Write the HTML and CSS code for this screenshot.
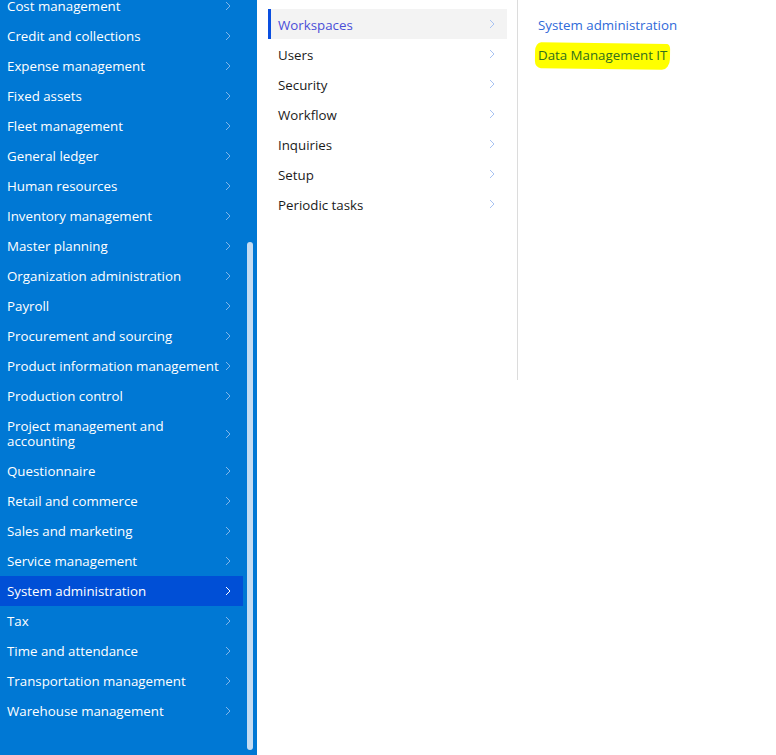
FILE: index.html
```html
<!DOCTYPE html>
<html>
<head>
<meta charset="utf-8">
<link rel="stylesheet" href="styles.css">
</head>
<body>
<div class="page">
  <nav class="modules">
    <ul class="mod-list">
      <li class="mod"><span>Cost management</span><svg class="chev" viewBox="0 0 6 10"><path d="M1 1l4 4-4 4"/></svg></li>
      <li class="mod"><span>Credit and collections</span><svg class="chev" viewBox="0 0 6 10"><path d="M1 1l4 4-4 4"/></svg></li>
      <li class="mod"><span>Expense management</span><svg class="chev" viewBox="0 0 6 10"><path d="M1 1l4 4-4 4"/></svg></li>
      <li class="mod"><span>Fixed assets</span><svg class="chev" viewBox="0 0 6 10"><path d="M1 1l4 4-4 4"/></svg></li>
      <li class="mod"><span>Fleet management</span><svg class="chev" viewBox="0 0 6 10"><path d="M1 1l4 4-4 4"/></svg></li>
      <li class="mod"><span>General ledger</span><svg class="chev" viewBox="0 0 6 10"><path d="M1 1l4 4-4 4"/></svg></li>
      <li class="mod"><span>Human resources</span><svg class="chev" viewBox="0 0 6 10"><path d="M1 1l4 4-4 4"/></svg></li>
      <li class="mod"><span>Inventory management</span><svg class="chev" viewBox="0 0 6 10"><path d="M1 1l4 4-4 4"/></svg></li>
      <li class="mod"><span>Master planning</span><svg class="chev" viewBox="0 0 6 10"><path d="M1 1l4 4-4 4"/></svg></li>
      <li class="mod"><span>Organization administration</span><svg class="chev" viewBox="0 0 6 10"><path d="M1 1l4 4-4 4"/></svg></li>
      <li class="mod"><span>Payroll</span><svg class="chev" viewBox="0 0 6 10"><path d="M1 1l4 4-4 4"/></svg></li>
      <li class="mod"><span>Procurement and sourcing</span><svg class="chev" viewBox="0 0 6 10"><path d="M1 1l4 4-4 4"/></svg></li>
      <li class="mod"><span>Product information management</span><svg class="chev" viewBox="0 0 6 10"><path d="M1 1l4 4-4 4"/></svg></li>
      <li class="mod"><span>Production control</span><svg class="chev" viewBox="0 0 6 10"><path d="M1 1l4 4-4 4"/></svg></li>
      <li class="mod two"><span>Project management and<br>accounting</span><svg class="chev" viewBox="0 0 6 10"><path d="M1 1l4 4-4 4"/></svg></li>
      <li class="mod"><span>Questionnaire</span><svg class="chev" viewBox="0 0 6 10"><path d="M1 1l4 4-4 4"/></svg></li>
      <li class="mod"><span>Retail and commerce</span><svg class="chev" viewBox="0 0 6 10"><path d="M1 1l4 4-4 4"/></svg></li>
      <li class="mod"><span>Sales and marketing</span><svg class="chev" viewBox="0 0 6 10"><path d="M1 1l4 4-4 4"/></svg></li>
      <li class="mod"><span>Service management</span><svg class="chev" viewBox="0 0 6 10"><path d="M1 1l4 4-4 4"/></svg></li>
      <li class="mod active"><span>System administration</span><svg class="chev" viewBox="0 0 6 10"><path d="M1 1l4 4-4 4"/></svg></li>
      <li class="mod"><span>Tax</span><svg class="chev" viewBox="0 0 6 10"><path d="M1 1l4 4-4 4"/></svg></li>
      <li class="mod"><span>Time and attendance</span><svg class="chev" viewBox="0 0 6 10"><path d="M1 1l4 4-4 4"/></svg></li>
      <li class="mod"><span>Transportation management</span><svg class="chev" viewBox="0 0 6 10"><path d="M1 1l4 4-4 4"/></svg></li>
      <li class="mod"><span>Warehouse management</span><svg class="chev" viewBox="0 0 6 10"><path d="M1 1l4 4-4 4"/></svg></li>
    </ul>
    <div class="scrollbar"></div>
  </nav>
  <section class="submenu">
    <ul class="sub-list">
      <li class="sub selected"><span>Workspaces</span><svg class="chev" viewBox="0 0 6 10"><path d="M1 1l4 4-4 4"/></svg></li>
      <li class="sub"><span>Users</span><svg class="chev" viewBox="0 0 6 10"><path d="M1 1l4 4-4 4"/></svg></li>
      <li class="sub"><span>Security</span><svg class="chev" viewBox="0 0 6 10"><path d="M1 1l4 4-4 4"/></svg></li>
      <li class="sub"><span>Workflow</span><svg class="chev" viewBox="0 0 6 10"><path d="M1 1l4 4-4 4"/></svg></li>
      <li class="sub"><span>Inquiries</span><svg class="chev" viewBox="0 0 6 10"><path d="M1 1l4 4-4 4"/></svg></li>
      <li class="sub"><span>Setup</span><svg class="chev" viewBox="0 0 6 10"><path d="M1 1l4 4-4 4"/></svg></li>
      <li class="sub"><span>Periodic tasks</span><svg class="chev" viewBox="0 0 6 10"><path d="M1 1l4 4-4 4"/></svg></li>
    </ul>
    <div class="divider"></div>
    <ul class="links">
      <li class="link">System administration</li>
      <li class="link marked"><span class="hl"></span><span class="hl-text">Data Management IT</span></li>
    </ul>
  </section>
</div>
</body>
</html>
```
FILE: styles.css
```css
html, body {
  margin: 0;
  padding: 0;
  background: #fff;
  font-family: "Open Sans", "Noto Sans", sans-serif;
  font-size: 13.3px;
}
ul { list-style: none; margin: 0; padding: 0; }
.page {
  display: flex;
  height: 755px;
  overflow: hidden;
}
.modules {
  width: 257px;
  flex: none;
  background: #0078d4;
  display: flex;
}
.mod-list {
  width: 243px;
  margin-top: -9px;
}
.mod {
  height: 30px;
  display: flex;
  align-items: center;
  justify-content: space-between;
  padding: 0 12px 0 7px;
  color: #fff;
  line-height: 15px;
  white-space: nowrap;
}
.mod.two { height: 45px; }
.mod.active { background: #004fd6; }
.chev {
  width: 6px;
  height: 10px;
  flex: none;
  fill: none;
  stroke: #7fb5ea;
  stroke-width: 1;
}
.mod.active .chev { stroke: #fff; }
.scrollbar {
  width: 6px;
  margin: 242px 0 5px 4px;
  background: #c4dcf2;
  border-radius: 3px;
}
.submenu {
  flex: 1;
  display: flex;
  align-items: flex-start;
  padding-left: 11px;
}
.sub-list {
  width: 239px;
  margin-top: 9px;
}
.sub {
  height: 30px;
  box-sizing: border-box;
  display: flex;
  align-items: center;
  justify-content: space-between;
  padding: 2px 12px 0 10px;
  color: #1b1b1b;
}
.sub .chev { stroke: #a9c3f2; margin-top: -2px; }
.sub.selected {
  background: #f3f3f3;
  border-left: 3px solid #0a4fe0;
  padding-left: 7px;
  color: #4a4fd8;
}
.divider {
  width: 1px;
  height: 380px;
  background: #dcdcdc;
  margin-left: 10px;
}
.links {
  margin-top: 9px;
  padding-left: 20px;
}
.link {
  height: 30px;
  box-sizing: border-box;
  padding-top: 2px;
  display: flex;
  align-items: center;
  color: #2f6ad9;
  position: relative;
}
.hl {
  position: absolute;
  left: -3px;
  top: 4px;
  width: 135px;
  height: 26px;
  background: #ffff00;
  border-radius: 6px 3px 8px 6px / 9px 5px 11px 7px;
  transform: rotate(0.8deg);
}
.hl-text {
  position: relative;
  color: #32701e;
}
```
